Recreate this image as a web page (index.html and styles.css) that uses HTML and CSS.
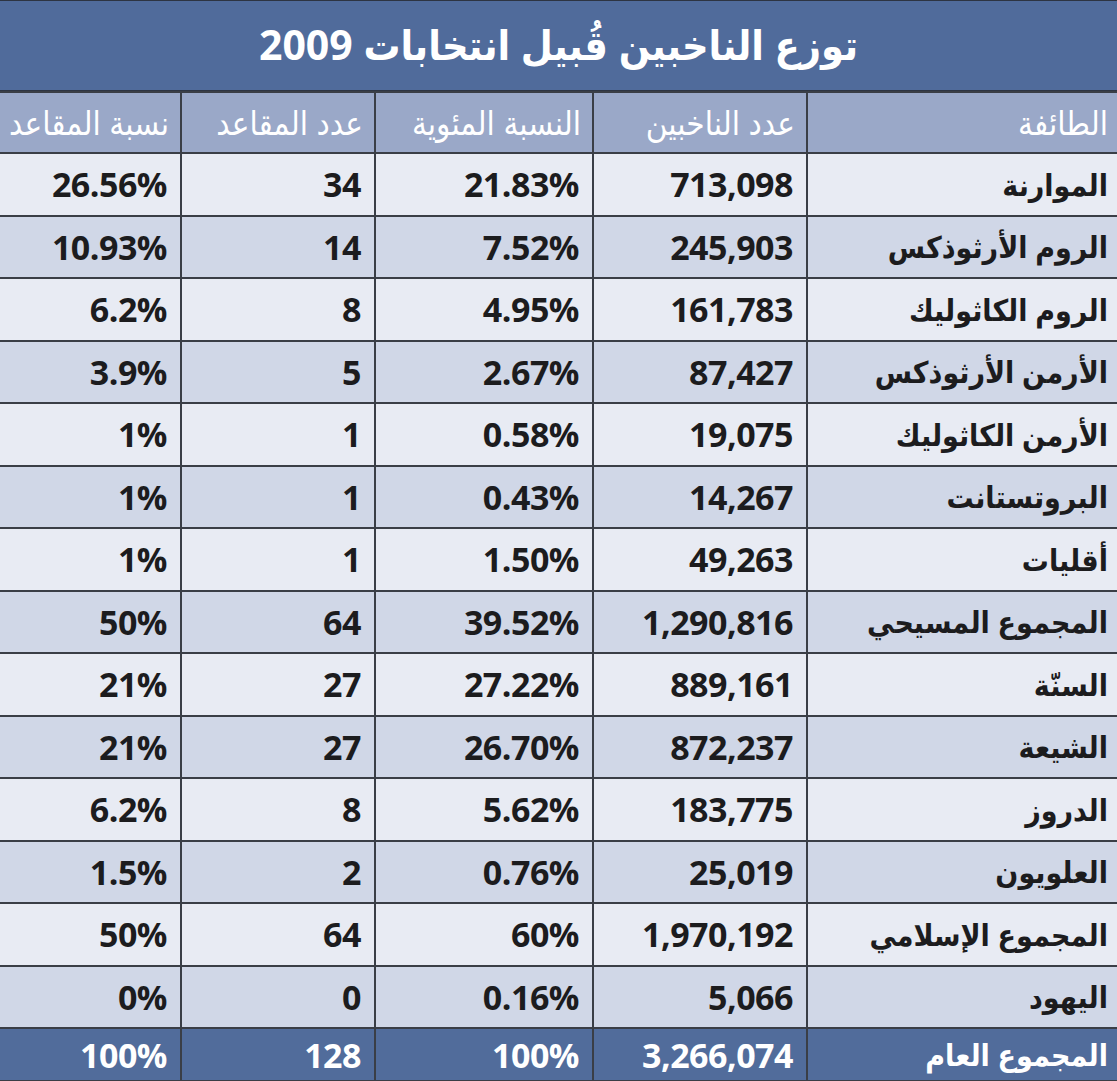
FILE: index.html
```html
<!DOCTYPE html>
<html lang="ar" dir="rtl">
<head>
<meta charset="utf-8">
<link rel="stylesheet" href="styles.css">
</head>
<body>
<div class="page">
  <h1 class="title">توزع الناخبين قُبيل انتخابات 2009</h1>
  <table class="grid">
    <colgroup>
      <col class="c-name"><col class="c-voters"><col class="c-pct"><col class="c-seats"><col class="c-seatpct">
    </colgroup>
    <thead>
      <tr>
        <th>الطائفة</th><th>عدد الناخبين</th><th>النسبة المئوية</th><th>عدد المقاعد</th><th>نسبة المقاعد</th>
      </tr>
    </thead>
    <tbody>
      <tr class="odd"><td class="name">الموارنة</td><td>713,098</td><td>21.83%</td><td>34</td><td>26.56%</td></tr>
      <tr class="even"><td class="name">الروم الأرثوذكس</td><td>245,903</td><td>7.52%</td><td>14</td><td>10.93%</td></tr>
      <tr class="odd"><td class="name">الروم الكاثوليك</td><td>161,783</td><td>4.95%</td><td>8</td><td>6.2%</td></tr>
      <tr class="even"><td class="name">الأرمن الأرثوذكس</td><td>87,427</td><td>2.67%</td><td>5</td><td>3.9%</td></tr>
      <tr class="odd"><td class="name">الأرمن الكاثوليك</td><td>19,075</td><td>0.58%</td><td>1</td><td>1%</td></tr>
      <tr class="even"><td class="name">البروتستانت</td><td>14,267</td><td>0.43%</td><td>1</td><td>1%</td></tr>
      <tr class="odd"><td class="name">أقليات</td><td>49,263</td><td>1.50%</td><td>1</td><td>1%</td></tr>
      <tr class="even"><td class="name">المجموع المسيحي</td><td>1,290,816</td><td>39.52%</td><td>64</td><td>50%</td></tr>
      <tr class="odd"><td class="name">السنّة</td><td>889,161</td><td>27.22%</td><td>27</td><td>21%</td></tr>
      <tr class="even"><td class="name">الشيعة</td><td>872,237</td><td>26.70%</td><td>27</td><td>21%</td></tr>
      <tr class="odd"><td class="name">الدروز</td><td>183,775</td><td>5.62%</td><td>8</td><td>6.2%</td></tr>
      <tr class="even"><td class="name">العلويون</td><td>25,019</td><td>0.76%</td><td>2</td><td>1.5%</td></tr>
      <tr class="odd"><td class="name">المجموع الإسلامي</td><td>1,970,192</td><td>60%</td><td>64</td><td>50%</td></tr>
      <tr class="even"><td class="name">اليهود</td><td>5,066</td><td>0.16%</td><td>0</td><td>0%</td></tr>
    </tbody>
    <tfoot>
      <tr class="total"><td class="name">المجموع العام</td><td>3,266,074</td><td>100%</td><td>128</td><td>100%</td></tr>
    </tfoot>
  </table>
</div>
</body>
</html>
```

FILE: styles.css
```css
html, body {
  margin: 0;
  padding: 0;
  background: #e8ebf3;
}

.page {
  width: 1117px;
  direction: rtl;
  font-family: "Open Sans", "DejaVu Sans Condensed", "DejaVu Sans", sans-serif;
}

.title {
  margin: 0;
  height: 91px;
  line-height: 86px;
  background: #506b9b;
  color: #ffffff;
  font-size: 41px;
  font-weight: 700;
  text-align: center;
  border-top: 1px solid #2d3442;
  border-bottom: 1px solid #2d3442;
  box-sizing: border-box;
}

.grid {
  width: 1117px;
  border-collapse: collapse;
  table-layout: fixed;
  direction: rtl;
}

.c-name { width: 310px; }
.c-voters { width: 214px; }
.c-pct { width: 218px; }
.c-seats { width: 194px; }
.c-seatpct { width: 181px; }

.grid th,
.grid td {
  border: 2px solid #3a3e46;
  text-align: right;
  padding: 0 13px 0 0;
  white-space: nowrap;
  overflow: hidden;
}

.grid tr > *:first-child { border-right: none; padding-right: 9px; }
.grid tr > *:last-child { border-left: none; }

.grid th {
  background: #9aa8c8;
  color: #ffffff;
  font-size: 33px;
  font-weight: 400;
  height: 59px;
  padding-right: 11px;
}

.grid td {
  height: 60.5px;
  color: #1c1c1e;
  font-size: 34px;
  font-weight: 700;
  letter-spacing: -0.5px;
}

.grid td.name {
  font-size: 30px;
  letter-spacing: 0;
}

.odd td { background: #e8ebf3; }
.even td { background: #d0d7e7; }

.total td {
  background: #516c9b;
  color: #ffffff;
  height: 51px;
  border-bottom: 2px solid #3a3e46;
}
```
